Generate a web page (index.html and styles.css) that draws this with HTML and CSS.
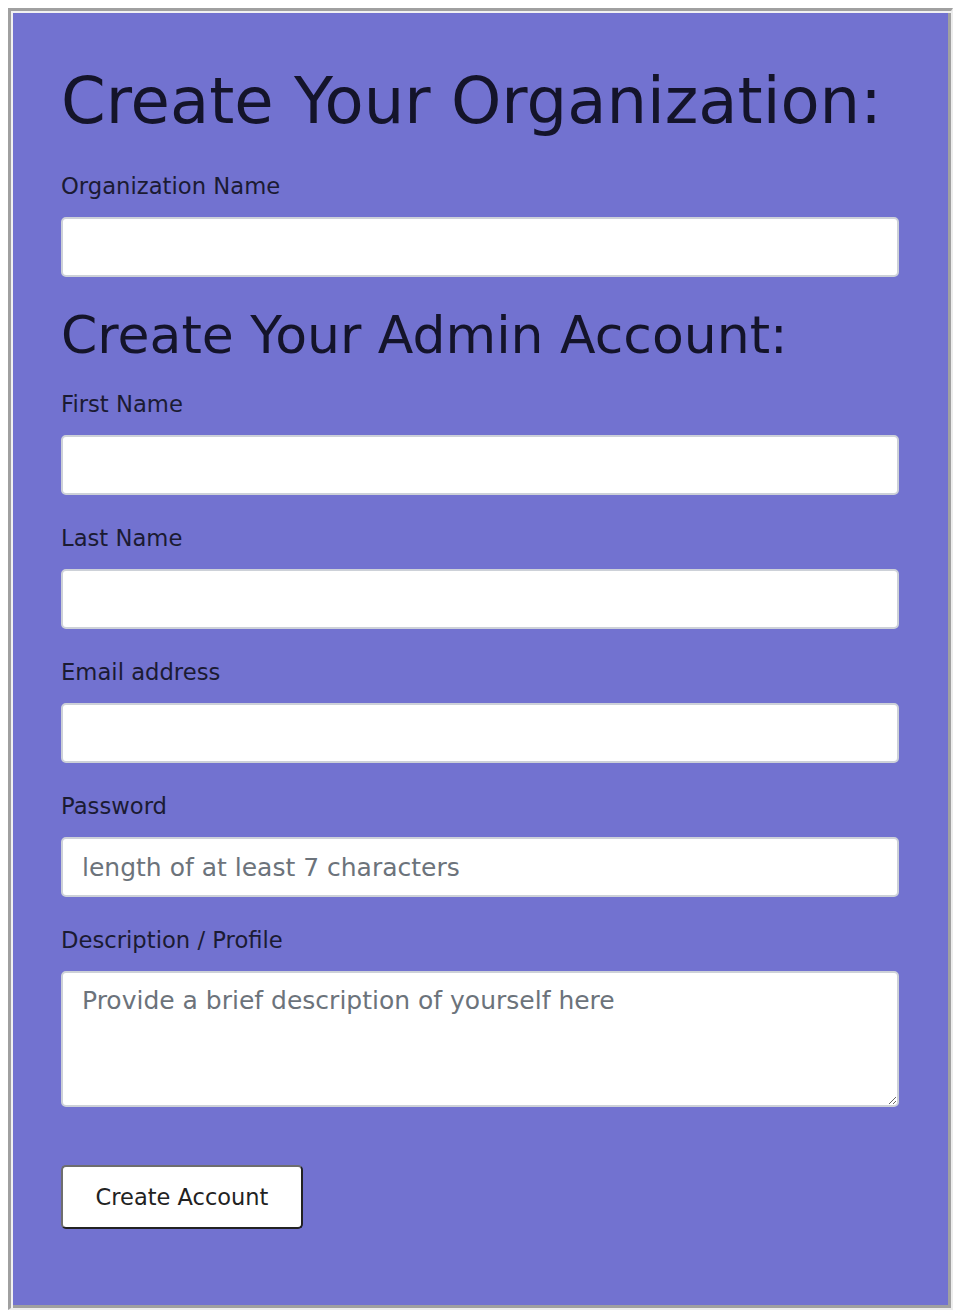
FILE: index.html
```html
<!DOCTYPE html>
<html lang="en">
<head>
<meta charset="utf-8">
<title>Create Your Organization</title>
<link rel="stylesheet" href="styles.css">
</head>
<body>
<div class="frame">
  <form class="form">
    <h1 class="title">Create Your Organization:</h1>
    <div class="field field-org">
      <label class="label" for="org">Organization Name</label>
      <input class="input" id="org" type="text">
    </div>
    <h2 class="subtitle">Create Your Admin Account:</h2>
    <div class="field">
      <label class="label" for="first">First Name</label>
      <input class="input" id="first" type="text">
    </div>
    <div class="field">
      <label class="label" for="last">Last Name</label>
      <input class="input" id="last" type="text">
    </div>
    <div class="field">
      <label class="label" for="email">Email address</label>
      <input class="input" id="email" type="email">
    </div>
    <div class="field">
      <label class="label" for="pw">Password</label>
      <input class="input" id="pw" type="password" placeholder="length of at least 7 characters">
    </div>
    <div class="field field-desc">
      <label class="label" for="desc">Description / Profile</label>
      <textarea class="input textarea" id="desc" placeholder="Provide a brief description of yourself here"></textarea>
    </div>
    <button class="btn" type="button">Create Account</button>
  </form>
</div>
</body>
</html>
```

FILE: styles.css
```css
html, body {
  margin: 0;
  padding: 0;
  background: #ffffff;
}

body {
  padding: 8px;
  font-family: "DejaVu Sans", "Noto Sans", sans-serif;
}

.frame {
  box-sizing: border-box;
  width: 945px;
  height: 1302px;
  background: #7272d0;
  border-style: solid;
  border-width: 3px 2px 2px 3px;
  border-color: #a0a0a0 #ededed #ededed #a0a0a0;
  box-shadow: inset 2px 2px 0 #f1f1f1, inset -3px -3px 0 #a0a0a0;
  padding: 52px 52px 0 50px;
}

.form {
  display: flex;
  flex-direction: column;
  align-items: stretch;
}

.title {
  margin: 0 0 34px;
  font-size: 64px;
  line-height: 76px;
  font-weight: 400;
  color: #14142a;
}

.subtitle {
  margin: 0 0 25px;
  font-size: 52px;
  line-height: 62px;
  font-weight: 400;
  color: #14142a;
}

.field {
  display: flex;
  flex-direction: column;
  margin-bottom: 30px;
}

.field-org {
  margin-bottom: 27px;
}

.field-desc {
  margin-bottom: 58px;
}

.label {
  font-size: 22.7px;
  line-height: 26px;
  color: #1b1b33;
  margin-bottom: 18px;
}

.input {
  box-sizing: border-box;
  height: 60px;
  width: 100%;
  margin: 0;
  border: 2px solid #cdd1d8;
  border-radius: 5px;
  background: #ffffff;
  padding: 0 19px;
  font-family: "DejaVu Sans", "Noto Sans", sans-serif;
  font-size: 25px;
  color: #212529;
  outline: none;
}

.input::placeholder {
  color: #6c737b;
  opacity: 1;
}

.textarea {
  height: 136px;
  padding: 13px 19px;
  line-height: 1.2;
  resize: both;
}

.btn {
  box-sizing: border-box;
  align-self: flex-start;
  width: 242px;
  height: 64px;
  margin: 0;
  padding: 0;
  background: #ffffff;
  border-style: solid;
  border-width: 2px;
  border-color: #6e6e6e #222222 #222222 #6e6e6e;
  border-radius: 5px;
  font-family: "DejaVu Sans", "Noto Sans", sans-serif;
  font-size: 22.5px;
  color: #222222;
  cursor: pointer;
}
```
